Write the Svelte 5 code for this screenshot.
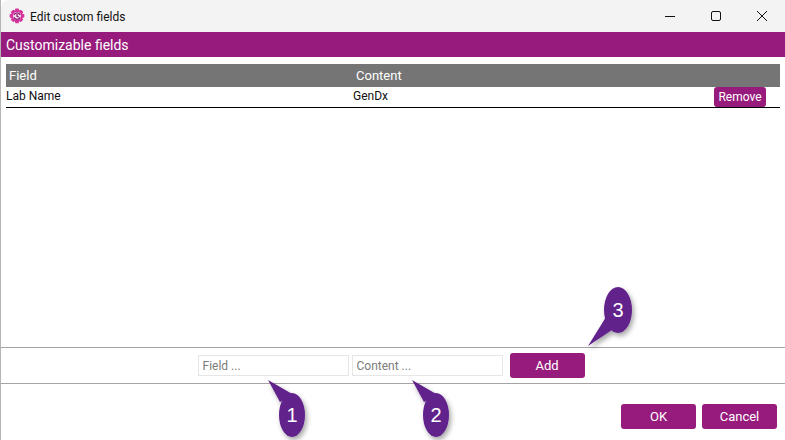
<script lang="ts">
    const callouts = [
        { n: 1, cx: 292, cy: 415, rx: 13, ry: 22, tip: "268,380 280,402 294,395" },
        { n: 2, cx: 436, cy: 415, rx: 13, ry: 22, tip: "412,380 424,402 438,395" },
        { n: 3, cx: 618, cy: 310, rx: 14, ry: 23, tip: "588,346 606,317 612,330" }
    ];
</script>

<div class="window">
    <header class="titlebar">
        <svg class="logo" width="16" height="16" viewBox="0 0 16 16">
            <path fill="#d6329c" d="M6.400.600h3.200l.5 2 1.800-.9 2.300 2.300-.9 1.800 2 .5v3.200l-2 .5.9 1.800-2.300 2.300-1.800-.9-.5 2H6.400l-.5-2-1.800.9-2.300-2.300.9-1.800-2-.5V6.300l2-.5-.9-1.800 2.300-2.300 1.800.9z"/>
            <circle cx="8" cy="8" r="3.900" fill="#f6e3f0"/>
            <path fill="none" stroke="#8e1a78" stroke-width="1.300" d="M5 7a3.200 3.200 0 0 1 6 0M11 9.200a3.200 3.200 0 0 1-6 0M8 6v2.300l1.700.6"/>
        </svg>
        <span class="title">Edit custom fields</span>
        <div class="controls">
            <svg width="12" height="12" viewBox="0 0 12 12"><path d="M1 6.500h10" stroke="#111" fill="none"/></svg>
            <svg width="12" height="12" viewBox="0 0 12 12"><rect x="1.500" y="1.500" width="9" height="9" rx="1.500" stroke="#111" fill="none"/></svg>
            <svg width="12" height="12" viewBox="0 0 12 12"><path d="M1 1l10 10M11 1L1 11" stroke="#111" fill="none"/></svg>
        </div>
    </header>

    <div class="band">Customizable fields</div>

    <main class="content">
        <div class="table-head">
            <span class="col-field">Field</span>
            <span>Content</span>
        </div>
        <div class="table-row">
            <span class="col-name">Lab Name</span>
            <span class="col-value">GenDx</span>
            <button class="remove">Remove</button>
        </div>
    </main>

    <div class="add-bar">
        <input class="field-input" placeholder="Field ..." />
        <input class="field-input" placeholder="Content ..." />
        <button class="btn add">Add</button>
    </div>

    <footer class="actions">
        <button class="btn">OK</button>
        <button class="btn">Cancel</button>
    </footer>

    <svg class="overlay" width="785" height="440" viewBox="0 0 785 440">
        <defs>
            <filter id="soft" x="-40%" y="-40%" width="180%" height="180%">
                <feDropShadow dx="2" dy="3" stdDeviation="2.500" flood-color="#000" flood-opacity="0.35"/>
            </filter>
        </defs>
        {#each callouts as c}
            <g filter="url(#soft)">
                <polygon points={c.tip} fill="#62218b"/>
                <ellipse cx={c.cx} cy={c.cy} rx={c.rx} ry={c.ry} fill="#62218b"/>
            </g>
            <text x={c.cx} y={c.cy + 7} text-anchor="middle">{c.n}</text>
        {/each}
    </svg>
</div>

<style>
    :global(body) {
        background: #fff;
    }

    .window {
        position: relative;
        width: 785px;
        height: 440px;
        box-sizing: border-box;
        border-left: 1px solid #b4b4b4;
        display: flex;
        flex-direction: column;
        overflow: hidden;
        background: #fff;
        font-family: Roboto, "Open Sans", sans-serif;
        font-size: 12px;
        color: #111;
    }

    .titlebar {
        height: 32px;
        flex: none;
        display: flex;
        align-items: center;
        padding-left: 8px;
        background: #f3f3f3;
        border-top-left-radius: 8px;
    }

    .logo {
        margin-right: 5px;
    }

    .title {
        font-size: 12px;
        flex: 1;
        padding-top: 1px;
    }

    .controls {
        display: flex;
        gap: 34px;
        padding-right: 17px;
    }

    .controls svg {
        display: block;
    }

    .band {
        height: 25px;
        flex: none;
        padding-left: 5px;
        line-height: 26px;
        background: #971b7c;
        color: #fff;
        font-size: 14px;
    }

    .content {
        flex: 1;
        padding: 7px 5px 0 5px;
    }

    .table-head {
        height: 23px;
        display: flex;
        align-items: center;
        background: #757575;
        color: #fff;
        font-size: 13px;
        padding-left: 3px;
    }

    .col-field {
        width: 347px;
    }

    .table-row {
        height: 20px;
        display: flex;
        align-items: flex-start;
        border-bottom: 1px solid #000;
        line-height: 18px;
    }

    .col-name {
        width: 347px;
    }

    .col-value {
        flex: 1;
    }

    .remove {
        width: 52px;
        height: 20px;
        margin-right: 14px;
        padding: 0;
        border: none;
        border-radius: 3px;
        background: #971b7c;
        color: #fff;
        font: inherit;
        font-size: 12px;
    }

    .add-bar {
        height: 35px;
        flex: none;
        display: flex;
        align-items: center;
        justify-content: center;
        gap: 3px;
        padding-right: 4px;
        border-top: 1px solid #a3a3a3;
        border-bottom: 1px solid #a3a3a3;
    }

    .field-input {
        width: 151px;
        height: 21px;
        box-sizing: border-box;
        padding: 1px 4px 0;
        border: 1px solid #e6e6e6;
        background: #fff;
        font: inherit;
        font-size: 12px;
        color: #111;
    }

    .field-input::placeholder {
        color: #7c7c7c;
        opacity: 1;
    }

    .add {
        margin-left: 4px;
    }

    .actions {
        height: 56px;
        flex: none;
        box-sizing: border-box;
        display: flex;
        justify-content: flex-end;
        gap: 6px;
        padding: 20px 8px 0 0;
    }

    .btn {
        width: 75px;
        height: 25px;
        padding: 0;
        border: none;
        border-radius: 3px;
        background: #971b7c;
        color: #fff;
        font: inherit;
        font-size: 13px;
    }

    .overlay {
        position: absolute;
        left: -1px;
        top: 0;
        pointer-events: none;
    }

    .overlay text {
        fill: #fff;
        font-family: "Liberation Sans", sans-serif;
        font-size: 20px;
    }
</style>
